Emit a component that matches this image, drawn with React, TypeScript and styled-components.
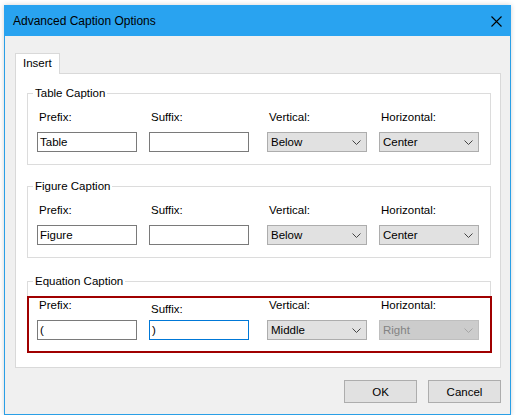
import React from 'react';
import styled, {createGlobalStyle} from "styled-components";

const GlobalStyle = createGlobalStyle`
    html, body {
        margin: 0;
        padding: 0;
        background: #ffffff;
    }
    body {
        font-family: "Liberation Sans", Arial, sans-serif;
        font-size: 11px;
        color: #000;
    }
`;

type Field = {
    label: string;
    value: string;
    kind: "text" | "select";
    offset: number;
    focused?: boolean;
    disabled?: boolean;
    drop?: number;
};

type Group = {
    title: string;
    fields: Field[];
    highlighted?: boolean;
};

const groups: Group[] = [
    {
        title: "Table Caption",
        fields: [
            {label: "Prefix:", value: "Table", kind: "text", offset: 0},
            {label: "Suffix:", value: "", kind: "text", offset: 12},
            {label: "Vertical:", value: "Below", kind: "select", offset: 18},
            {label: "Horizontal:", value: "Center", kind: "select", offset: 12},
        ],
    },
    {
        title: "Figure Caption",
        fields: [
            {label: "Prefix:", value: "Figure", kind: "text", offset: 0},
            {label: "Suffix:", value: "", kind: "text", offset: 12},
            {label: "Vertical:", value: "Below", kind: "select", offset: 18},
            {label: "Horizontal:", value: "Center", kind: "select", offset: 12},
        ],
    },
    {
        title: "Equation Caption",
        highlighted: true,
        fields: [
            {label: "Prefix:", value: "(", kind: "text", offset: 0},
            {label: "Suffix:", value: ")", kind: "text", offset: 12, focused: true, drop: 4},
            {label: "Vertical:", value: "Middle", kind: "select", offset: 18},
            {label: "Horizontal:", value: "Right", kind: "select", offset: 12, disabled: true},
        ],
    },
];

const CloseIcon = () => (
    <svg width="11" height="11" viewBox="0 0 11 11">
        <path d="M0.5 0.5 L10.5 10.5 M10.5 0.5 L0.5 10.5" stroke="#000" strokeWidth="1.1" fill="none"/>
    </svg>
);

const Chevron = ({color}: {color: string}) => (
    <svg width="9" height="5" viewBox="0 0 9 5">
        <path d="M0.5 0.5 L4.5 4.5 L8.5 0.5" stroke={color} strokeWidth="1" fill="none"/>
    </svg>
);

const FieldRow = ({fields}: {fields: Field[]}) => (
    <Row>
        {fields.map((f) => (
            <FieldCol key={f.label} $offset={f.offset}>
                <Label $drop={f.drop || 0}>{f.label}</Label>
                {f.kind === "text" ? (
                    <TextBox $focused={!!f.focused}>{f.value}</TextBox>
                ) : (
                    <SelectBox $disabled={!!f.disabled}>
                        <span>{f.value}</span>
                        <Chevron color={f.disabled ? "#a6a6a6" : "#444"}/>
                    </SelectBox>
                )}
            </FieldCol>
        ))}
    </Row>
);

export default function App() {
    return (
        <>
            <GlobalStyle/>
            <Screen>
                <Window>
                    <TitleBar>
                        <Title>Advanced Caption Options</Title>
                        <CloseButton>
                            <CloseIcon/>
                        </CloseButton>
                    </TitleBar>
                    <Client>
                        <TabStrip>
                            <Tab>Insert</Tab>
                        </TabStrip>
                        <TabPanel>
                            {groups.map((g) => (
                                <GroupBox key={g.title} $lead={g.highlighted ? 2 : 0}>
                                    <GroupTitle>{g.title}</GroupTitle>
                                    {g.highlighted ? (
                                        <Highlight>
                                            <FieldRow fields={g.fields}/>
                                        </Highlight>
                                    ) : (
                                        <Plain>
                                            <FieldRow fields={g.fields}/>
                                        </Plain>
                                    )}
                                </GroupBox>
                            ))}
                        </TabPanel>
                        <Buttons>
                            <DialogButton>OK</DialogButton>
                            <DialogButton>Cancel</DialogButton>
                        </Buttons>
                    </Client>
                </Window>
            </Screen>
        </>
    );
}

const Screen = styled.div`
    padding: 5px 0 0 4px;
`;

const Window = styled.div`
    width: 507px;
    height: 410px;
    box-sizing: border-box;
    border: 1px solid #2a9fe6;
    border-top: none;
    background: #f0f0f0;
    box-shadow: 0 0 5px rgba(0, 0, 0, 0.18);
    display: flex;
    flex-direction: column;
`;

const TitleBar = styled.div`
    height: 31px;
    margin: 0 -1px;
    background: #29a3f0;
    display: flex;
    align-items: center;
    justify-content: space-between;
    padding: 0 9px 0 9px;
`;

const Title = styled.span`
    font-size: 12px;
    color: #000;
`;

const CloseButton = styled.div`
    display: flex;
    align-items: center;
    padding-top: 1px;
`;

const Client = styled.div`
    padding: 17px 9px 0 10px;
`;

const TabStrip = styled.div`
    display: flex;
    height: 20px;
    position: relative;
    z-index: 1;
`;

const Tab = styled.div`
    width: 45px;
    height: 21px;
    box-sizing: border-box;
    background: #fff;
    border: 1px solid #d9d9d9;
    border-bottom: none;
    padding: 3px 0 0 7px;
    font-size: 11.5px;
`;

const TabPanel = styled.div`
    height: 295px;
    box-sizing: border-box;
    background: #fff;
    border: 1px solid #d9d9d9;
    padding: 12px 9px 0 11px;
    display: flex;
    flex-direction: column;
    gap: 14px;
`;

const GroupBox = styled.fieldset<{ $lead: number }>`
    margin: ${(p) => p.$lead}px 0 0 0;
    padding: 0 9px;
    min-inline-size: 0;
    border: 1px solid #dcdcdc;
`;

const GroupTitle = styled.legend`
    margin-left: -4px;
    padding: 0 2px;
    line-height: 14px;
    font-size: 11.5px;
`;

const Plain = styled.div`
    padding: 10px 0 12px 0;
`;

const Highlight = styled.div`
    margin: 8px -11px -1px -10px;
    border: 2px solid #a00000;
    padding: 0 0 11px 8px;
`;

const Row = styled.div`
    display: flex;
    align-items: flex-end;
`;

const FieldCol = styled.div<{ $offset: number }>`
    width: 100px;
    margin-left: ${(p) => p.$offset}px;
    display: flex;
    flex-direction: column;
`;

const Label = styled.div<{ $drop: number }>`
    line-height: 14px;
    font-size: 11.5px;
    padding-left: 2px;
    margin-top: ${(p) => p.$drop}px;
    margin-bottom: ${(p) => 8 - p.$drop}px;
`;

const TextBox = styled.div<{ $focused: boolean }>`
    height: 20px;
    box-sizing: border-box;
    border: 1px solid ${(p) => (p.$focused ? "#0078d7" : "#7a7a7a")};
    background: #fff;
    padding: 0 2px;
    line-height: 18px;
    font-size: 11.5px;
`;

const SelectBox = styled.div<{ $disabled: boolean }>`
    height: 20px;
    box-sizing: border-box;
    border: 1px solid ${(p) => (p.$disabled ? "#bfbfbf" : "#adadad")};
    background: ${(p) => (p.$disabled ? "#cccccc" : "#e1e1e1")};
    color: ${(p) => (p.$disabled ? "#838383" : "#000")};
    padding: 0 5px 0 3px;
    display: flex;
    align-items: center;
    justify-content: space-between;
    font-size: 11.5px;
`;

const Buttons = styled.div`
    display: flex;
    justify-content: flex-end;
    gap: 11px;
    padding-top: 12px;
`;

const DialogButton = styled.div`
    width: 73px;
    height: 23px;
    box-sizing: border-box;
    border: 1px solid #adadad;
    background: #e1e1e1;
    display: flex;
    align-items: center;
    justify-content: center;
    font-size: 11.5px;
`;
